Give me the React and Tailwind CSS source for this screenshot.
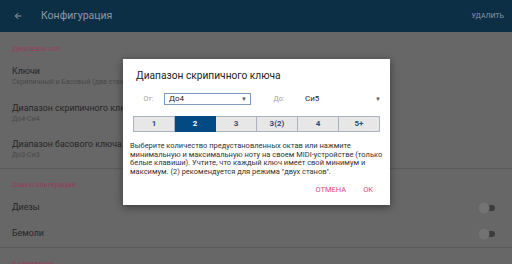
import React from "react";

const font = { fontFamily: "Roboto, 'Noto Sans', sans-serif" };

const Toggle = () => (
    <svg width="18" height="12" viewBox="0 0 18 12">
        <rect x="3" y="3" width="14" height="6" rx="3" fill="#3c3c3c" />
        <circle cx="6" cy="6" r="5.5" fill="#737373" />
    </svg>
);

const Arrow = () => (
    <span className="text-[6px] leading-none text-[#5a5a5a]">▼</span>
);

const segments = ["1", "2", "3", "3(2)", "4", "5+"];

const App = () => {
    return (
        <div className="relative w-[512px] h-[264px] overflow-hidden bg-[#676767]" style={font}>
            {/* top bar */}
            <div className="flex items-center h-[32px] bg-[#0c2f45] pl-[13px] pr-[8px]">
                <svg width="10" height="10" viewBox="0 0 24 24" className="text-[#8d9aa4]">
                    <path d="M20 11H7.83l5.59-5.59L12 4l-8 8 8 8 1.41-1.41L7.83 13H20v-2z" fill="currentColor" />
                </svg>
                <span className="ml-[18px] text-[10.5px] text-[#8d9aa4]">Конфигурация</span>
                <span className="ml-auto text-[7px] text-[#8d9aa4]">УДАЛИТЬ</span>
            </div>

            {/* settings list */}
            <div className="flex flex-col pl-[12px]">
                <div className="h-[28px] pt-[13px] text-[7.5px] leading-[8px] text-[#9a3b60]">Диапазон нот</div>
                <div className="h-[36px] pt-[6px]">
                    <div className="text-[8.8px] leading-[11px] text-[#262626]">Ключи</div>
                    <div className="text-[7px] leading-[10px] text-[#474747]">Скрипичный и Басовый (два станов)</div>
                </div>
                <div className="h-[36px] pt-[7px]">
                    <div className="text-[8.8px] leading-[11px] text-[#262626]">Диапазон скрипичного ключа</div>
                    <div className="text-[7px] leading-[10px] text-[#474747]">До4-Си4</div>
                </div>
                <div className="h-[36px] pt-[7px]">
                    <div className="text-[8.8px] leading-[11px] text-[#262626]">Диапазон басового ключа</div>
                    <div className="text-[7px] leading-[10px] text-[#474747]">До3-Си3</div>
                </div>
            </div>
            <div className="h-px bg-[#5b5b5b]" />
            <div className="flex flex-col pl-[12px]">
                <div className="h-[26px] pt-[12px] text-[7.5px] leading-[8px] text-[#9a3b60]">Знаки альтерации</div>
                <div className="flex items-center h-[26px] pr-[16px]">
                    <span className="text-[8.8px] text-[#262626]">Диезы</span>
                    <span className="ml-auto flex"><Toggle /></span>
                </div>
                <div className="flex items-center h-[26px] pr-[16px]">
                    <span className="text-[8.8px] text-[#262626]">Бемоли</span>
                    <span className="ml-auto flex"><Toggle /></span>
                </div>
            </div>
            <div className="h-px bg-[#5b5b5b]" />
            <div className="pl-[12px] pt-[12px] text-[7.5px] leading-[8px] text-[#9a3b60]">Клавиатура</div>

            {/* dialog */}
            <div className="absolute left-[123px] top-[59px] w-[267px] h-[146px] bg-white shadow-[0_2px_8px_rgba(0,0,0,0.45)] flex flex-col">
                <div className="pl-[13px] pt-[10px] text-[10.2px] leading-[14px] text-[#222]">Диапазон скрипичного ключа</div>
                <div className="flex items-center mt-[10px] ml-[10px] h-[12px]">
                    <span className="w-[31px] text-center text-[7px] text-[#a0a0a0]">От:</span>
                    <div className="flex items-center w-[87px] h-[12px] border border-[#7d9cc0] pl-[4px] pr-[3px]">
                        <span className="text-[8px] text-[#222]">До4</span>
                        <span className="ml-auto flex"><Arrow /></span>
                    </div>
                    <span className="w-[44px] text-center text-[7px] text-[#a0a0a0] ml-[6px]">До:</span>
                    <div className="flex items-center w-[85px] h-[12px] pl-[4px] pr-[5px]">
                        <span className="text-[8px] text-[#222]">Си5</span>
                        <span className="ml-auto flex"><Arrow /></span>
                    </div>
                </div>
                <div className="flex mt-[11px] ml-[10px] w-[247px] h-[16px]">
                    {segments.map((s, i) => (
                        <div
                            key={s}
                            className={`flex-1 flex items-center justify-center text-[8px] font-bold border ${i > 0 ? "border-l-0" : ""} ${i === 1 ? "bg-[#034a82] border-[#034a82] text-white" : "bg-[#e7e7e7] border-[#a9b3c1] text-[#2c4c7a]"}`}
                        >
                            {s}
                        </div>
                    ))}
                </div>
                <div className="mt-[10px] pl-[7px] text-[7.5px] leading-[8.5px] text-[#333] whitespace-nowrap">
                    <div>Выберите количество предустановленных октав или нажмите</div>
                    <div>минимальную и максимальную ноту на своем MIDI-устройстве (только</div>
                    <div>белые клавиши). Учтите, что каждый ключ имеет свой минимум и</div>
                    <div>максимум. (2) рекомендуется для режима "двух станов".</div>
                </div>
                <div className="flex justify-end items-center gap-[17px] mt-auto mb-[10px] pr-[17px] text-[7.5px] text-[#e2467f]">
                    <span>ОТМЕНА</span>
                    <span>OK</span>
                </div>
            </div>
        </div>
    );
};

export default App;
